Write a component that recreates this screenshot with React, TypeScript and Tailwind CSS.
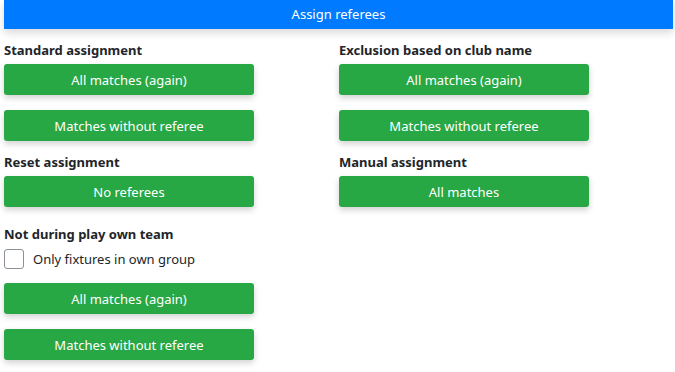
const font = { fontFamily: '"Noto Sans", "Open Sans", sans-serif' };

function ActionButton({ children }: { children: string }) {
  return (
    <button
      type="button"
      className="flex h-[31px] w-[250px] items-center justify-center rounded-[3px] bg-[#28a745] pt-px text-[13px] leading-none text-white shadow-[0_3px_6px_rgba(0,0,0,0.18)]"
    >
      {children}
    </button>
  );
}

function Section({ title, buttons }: { title: string; buttons: string[] }) {
  return (
    <div>
      <h2 className="text-[13px] font-bold leading-[20px] text-[#212529]">{title}</h2>
      <div className="mt-[4px] flex flex-col gap-[15px]">
        {buttons.map((b) => (
          <ActionButton key={b}>{b}</ActionButton>
        ))}
      </div>
    </div>
  );
}

export default function App() {
  return (
    <div className="min-h-[372px] w-[675px] bg-white" style={font}>
      <div className="ml-1 mr-[2px] flex h-[29px] items-center justify-center bg-[#007bff] text-[13px] text-white shadow-[0_4px_8px_rgba(0,0,0,0.15)]">
        Assign referees
      </div>
      <div className="grid grid-cols-[335px_1fr] gap-y-[11px] pl-1 pt-[11px]">
        <Section title="Standard assignment" buttons={["All matches (again)", "Matches without referee"]} />
        <Section title="Exclusion based on club name" buttons={["All matches (again)", "Matches without referee"]} />
        <Section title="Reset assignment" buttons={["No referees"]} />
        <Section title="Manual assignment" buttons={["All matches"]} />
        <div className="mt-[6px]">
          <h2 className="text-[13px] font-bold leading-[20px] text-[#212529]">Not during play own team</h2>
          <label className="mt-[5px] flex items-center gap-[9px] text-[13px] leading-[20px] text-[#212529]">
            <input type="checkbox" className="peer sr-only" />
            <span className="h-[20px] w-[20px] rounded-[3px] border-[1.5px] border-[#8c9098] bg-white" />
            Only fixtures in own group
          </label>
          <div className="mt-[14px] flex flex-col gap-[15px]">
            <ActionButton>All matches (again)</ActionButton>
            <ActionButton>Matches without referee</ActionButton>
          </div>
        </div>
      </div>
    </div>
  );
}
